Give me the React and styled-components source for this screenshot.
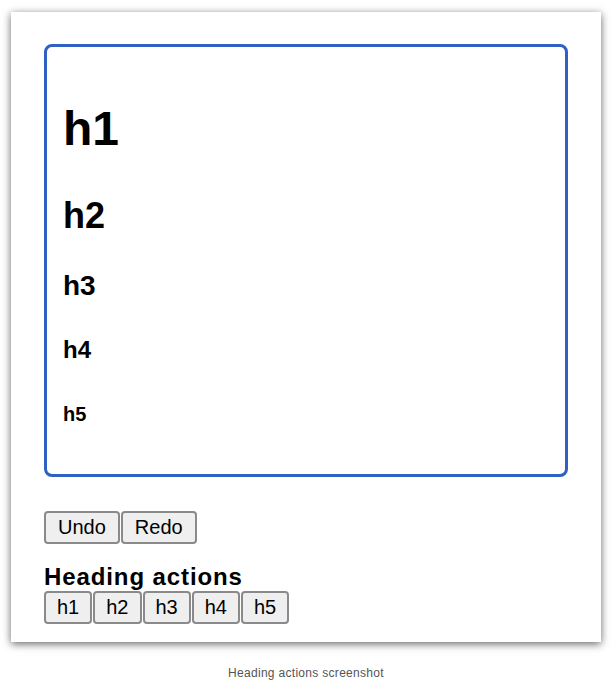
import React from "react";
import styled, { createGlobalStyle } from "styled-components";

const Global = createGlobalStyle`
  html, body { margin: 0; padding: 0; background: #ffffff; }
  body { font-family: "Liberation Sans", Arial, sans-serif; color: #000; }
`;

const Page = styled.div`
  width: 612px;
  height: 681px;
  display: flex;
  flex-direction: column;
  align-items: center;
  padding-top: 12px;
  box-sizing: border-box;
`;

const Card = styled.div`
  width: 590px;
  height: 630px;
  box-sizing: border-box;
  background: #ffffff;
  box-shadow: 0 2px 8px rgba(0, 0, 0, 0.6);
  padding: 32px 33px 18px;
  display: flex;
  flex-direction: column;
`;

const Editor = styled.div`
  box-sizing: border-box;
  height: 434px;
  border: 3px solid #2f60c2;
  border-radius: 8px;
  padding: 54px 16px 0;
  display: flex;
  flex-direction: column;
`;

const Heading = styled.div`
  margin: ${(p) => p.$mt}px 0 0;
  font-size: ${(p) => p.$size}px;
  font-weight: bold;
  line-height: 1.15;
`;

const Toolbar = styled.div`
  display: flex;
  gap: 1px;
  margin-top: ${(p) => p.$mt}px;
`;

const Button = styled.button`
  font-family: "Liberation Sans", Arial, sans-serif;
  font-size: 20px;
  line-height: 23px;
  color: #000;
  background: #efefef;
  border: 2px solid #8a8a8a;
  border-radius: 4px;
  padding: 3px ${(p) => p.$px}px;
  margin: 0;
`;

const Title = styled.div`
  margin-top: 19px;
  font-size: 24px;
  font-weight: bold;
  line-height: 1.15;
  letter-spacing: 0.9px;
`;

const Caption = styled.div`
  margin-top: 24px;
  font-family: "Liberation Sans", Arial, sans-serif;
  font-size: 12px;
  line-height: 14px;
  letter-spacing: 0.3px;
  color: #555555;
`;

const headings = [
  { t: "h1", size: 48, mt: 0 },
  { t: "h2", size: 36, mt: 39 },
  { t: "h3", size: 28, mt: 33 },
  { t: "h4", size: 24, mt: 34 },
  { t: "h5", size: 20, mt: 40 },
];

export default function App() {
  return (
    <>
      <Global />
      <Page>
        <Card>
          <Editor>
            {headings.map((h) => (
              <Heading key={h.t} $size={h.size} $mt={h.mt}>
                {h.t}
              </Heading>
            ))}
          </Editor>
          <Toolbar $mt={34}>
            <Button $px={12}>Undo</Button>
            <Button $px={12}>Redo</Button>
          </Toolbar>
          <Title>Heading actions</Title>
          <Toolbar $mt={0}>
            {["h1", "h2", "h3", "h4", "h5"].map((h) => (
              <Button key={h} $px={11}>
                {h}
              </Button>
            ))}
          </Toolbar>
        </Card>
        <Caption>Heading actions screenshot</Caption>
      </Page>
    </>
  );
}
